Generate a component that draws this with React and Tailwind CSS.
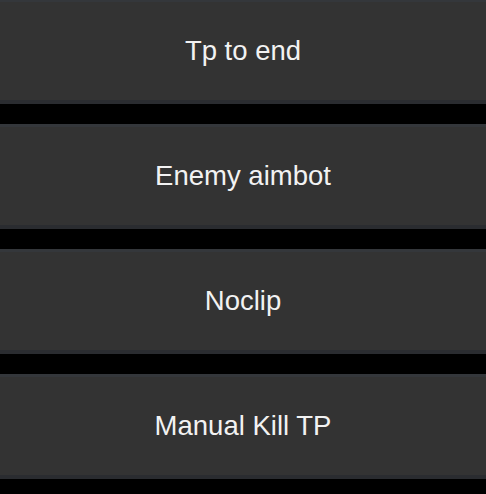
import React from 'react'

const actions = ['Tp to end', 'Enemy aimbot', 'Noclip', 'Manual Kill TP']

export default function App() {
  return (
    <div className="min-h-[494px] w-full overflow-hidden bg-black font-['Liberation_Sans',Arial,sans-serif]">
      <div className="-mt-px flex flex-col gap-5">
        {actions.map((label) => (
          <button
            key={label}
            className="flex h-[105px] w-full items-center justify-center border-t-[3px] border-b-4 border-t-[#34373b] border-b-[#2a2c30] bg-[#333333] text-[27.5px] text-[#f2f2f2]"
          >
            {label}
          </button>
        ))}
      </div>
    </div>
  )
}
